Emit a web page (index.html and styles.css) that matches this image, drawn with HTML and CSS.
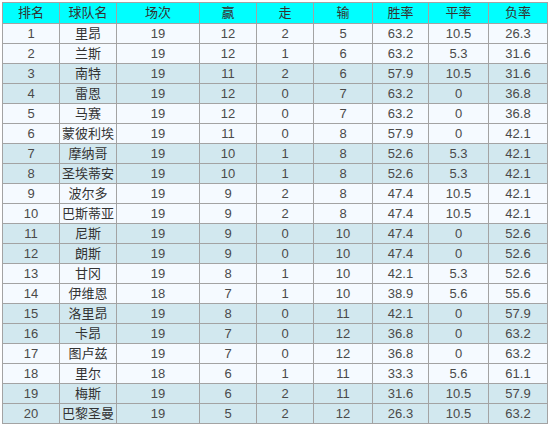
FILE: index.html
```html
<!DOCTYPE html>
<html>
<head>
<meta charset="utf-8">
<link rel="stylesheet" href="styles.css">
</head>
<body>
<table class="standings">
<colgroup>
<col class="c1"><col class="c2"><col class="c3"><col class="c4"><col class="c5"><col class="c6"><col class="c7"><col class="c8"><col class="c9">
</colgroup>
<thead>
<tr><th>排名</th><th>球队名</th><th>场次</th><th>赢</th><th>走</th><th>输</th><th>胜率</th><th>平率</th><th>负率</th></tr>
</thead>
<tbody>
<tr class="lt"><td>1</td><td class="team">里昂</td><td>19</td><td>12</td><td>2</td><td>5</td><td>63.2</td><td>10.5</td><td>26.3</td></tr>
<tr class="lt"><td>2</td><td class="team">兰斯</td><td>19</td><td>12</td><td>1</td><td>6</td><td>63.2</td><td>5.3</td><td>31.6</td></tr>
<tr class="bl"><td>3</td><td class="team">南特</td><td>19</td><td>11</td><td>2</td><td>6</td><td>57.9</td><td>10.5</td><td>31.6</td></tr>
<tr class="bl"><td>4</td><td class="team">雷恩</td><td>19</td><td>12</td><td>0</td><td>7</td><td>63.2</td><td>0</td><td>36.8</td></tr>
<tr class="lt"><td>5</td><td class="team">马赛</td><td>19</td><td>12</td><td>0</td><td>7</td><td>63.2</td><td>0</td><td>36.8</td></tr>
<tr class="lt"><td>6</td><td class="team">蒙彼利埃</td><td>19</td><td>11</td><td>0</td><td>8</td><td>57.9</td><td>0</td><td>42.1</td></tr>
<tr class="bl"><td>7</td><td class="team">摩纳哥</td><td>19</td><td>10</td><td>1</td><td>8</td><td>52.6</td><td>5.3</td><td>42.1</td></tr>
<tr class="bl"><td>8</td><td class="team">圣埃蒂安</td><td>19</td><td>10</td><td>1</td><td>8</td><td>52.6</td><td>5.3</td><td>42.1</td></tr>
<tr class="lt"><td>9</td><td class="team">波尔多</td><td>19</td><td>9</td><td>2</td><td>8</td><td>47.4</td><td>10.5</td><td>42.1</td></tr>
<tr class="lt"><td>10</td><td class="team">巴斯蒂亚</td><td>19</td><td>9</td><td>2</td><td>8</td><td>47.4</td><td>10.5</td><td>42.1</td></tr>
<tr class="bl"><td>11</td><td class="team">尼斯</td><td>19</td><td>9</td><td>0</td><td>10</td><td>47.4</td><td>0</td><td>52.6</td></tr>
<tr class="bl"><td>12</td><td class="team">朗斯</td><td>19</td><td>9</td><td>0</td><td>10</td><td>47.4</td><td>0</td><td>52.6</td></tr>
<tr class="lt"><td>13</td><td class="team">甘冈</td><td>19</td><td>8</td><td>1</td><td>10</td><td>42.1</td><td>5.3</td><td>52.6</td></tr>
<tr class="lt"><td>14</td><td class="team">伊维恩</td><td>18</td><td>7</td><td>1</td><td>10</td><td>38.9</td><td>5.6</td><td>55.6</td></tr>
<tr class="bl"><td>15</td><td class="team">洛里昂</td><td>19</td><td>8</td><td>0</td><td>11</td><td>42.1</td><td>0</td><td>57.9</td></tr>
<tr class="bl"><td>16</td><td class="team">卡昂</td><td>19</td><td>7</td><td>0</td><td>12</td><td>36.8</td><td>0</td><td>63.2</td></tr>
<tr class="lt"><td>17</td><td class="team">图卢兹</td><td>19</td><td>7</td><td>0</td><td>12</td><td>36.8</td><td>0</td><td>63.2</td></tr>
<tr class="lt"><td>18</td><td class="team">里尔</td><td>18</td><td>6</td><td>1</td><td>11</td><td>33.3</td><td>5.6</td><td>61.1</td></tr>
<tr class="bl"><td>19</td><td class="team">梅斯</td><td>19</td><td>6</td><td>2</td><td>11</td><td>31.6</td><td>10.5</td><td>57.9</td></tr>
<tr class="bl"><td>20</td><td class="team">巴黎圣曼</td><td>19</td><td>5</td><td>2</td><td>12</td><td>26.3</td><td>10.5</td><td>63.2</td></tr>
</tbody>
</table>
</body>
</html>
```

FILE: styles.css
```css
html, body {
  margin: 0;
  padding: 0;
  background: #ffffff;
}
body {
  padding: 2px;
  font-family: "Liberation Sans", Arial, "Noto Sans CJK SC", sans-serif;
  font-size: 13px;
  color: #4a4a4a;
}
.standings {
  border-collapse: collapse;
  table-layout: fixed;
  width: 545px;
}
.c1 { width: 57px; }
.c2 { width: 57px; }
.c3 { width: 83px; }
.c4 { width: 57px; }
.c5 { width: 57px; }
.c6 { width: 59px; }
.c7 { width: 56px; }
.c8 { width: 60px; }
.c9 { width: 59px; }
.standings th,
.standings td {
  border: 1px solid #a3a3a3;
  text-align: center;
  padding: 0;
  height: 19px;
  line-height: 19px;
  font-weight: normal;
  white-space: nowrap;
  overflow: hidden;
}
.standings th {
  background: #00ffff;
  color: #333333;
  height: 20px;
  line-height: 20px;
}
.standings td.team {
  color: #333333;
}
.lt td { background: #f5faff; }
.bl td { background: #d2e8ef; }
```
